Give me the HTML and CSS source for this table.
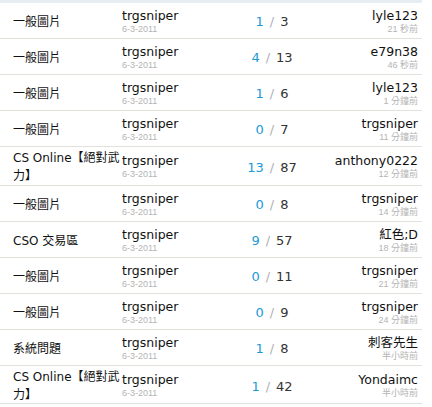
FILE: index.html
```html
<!DOCTYPE html>
<html>
<head>
<meta charset="utf-8">
<link rel="stylesheet" href="styles.css">
</head>
<body>
<div class="list">
  <div class="row"><div class="title">一般圖片</div><div class="author"><div class="name">trgsniper</div><div class="date">6-3-2011</div></div><div class="count"><span class="rep">1</span><span class="sep">/</span><span class="view">3</span></div><div class="last"><div class="name">lyle123</div><div class="time">21 秒前</div></div></div>
  <div class="row"><div class="title">一般圖片</div><div class="author"><div class="name">trgsniper</div><div class="date">6-3-2011</div></div><div class="count"><span class="rep">4</span><span class="sep">/</span><span class="view">13</span></div><div class="last"><div class="name">e79n38</div><div class="time">46 秒前</div></div></div>
  <div class="row"><div class="title">一般圖片</div><div class="author"><div class="name">trgsniper</div><div class="date">6-3-2011</div></div><div class="count"><span class="rep">1</span><span class="sep">/</span><span class="view">6</span></div><div class="last"><div class="name">lyle123</div><div class="time">1 分鐘前</div></div></div>
  <div class="row"><div class="title">一般圖片</div><div class="author"><div class="name">trgsniper</div><div class="date">6-3-2011</div></div><div class="count"><span class="rep">0</span><span class="sep">/</span><span class="view">7</span></div><div class="last"><div class="name">trgsniper</div><div class="time">11 分鐘前</div></div></div>
  <div class="row tall"><div class="title">CS Online【絕對武力】</div><div class="author"><div class="name">trgsniper</div><div class="date">6-3-2011</div></div><div class="count"><span class="rep">13</span><span class="sep">/</span><span class="view">87</span></div><div class="last"><div class="name">anthony0222</div><div class="time">12 分鐘前</div></div></div>
  <div class="row"><div class="title">一般圖片</div><div class="author"><div class="name">trgsniper</div><div class="date">6-3-2011</div></div><div class="count"><span class="rep">0</span><span class="sep">/</span><span class="view">8</span></div><div class="last"><div class="name">trgsniper</div><div class="time">14 分鐘前</div></div></div>
  <div class="row"><div class="title">CSO 交易區</div><div class="author"><div class="name">trgsniper</div><div class="date">6-3-2011</div></div><div class="count"><span class="rep">9</span><span class="sep">/</span><span class="view">57</span></div><div class="last"><div class="name">紅色;D</div><div class="time">18 分鐘前</div></div></div>
  <div class="row"><div class="title">一般圖片</div><div class="author"><div class="name">trgsniper</div><div class="date">6-3-2011</div></div><div class="count"><span class="rep">0</span><span class="sep">/</span><span class="view">11</span></div><div class="last"><div class="name">trgsniper</div><div class="time">21 分鐘前</div></div></div>
  <div class="row"><div class="title">一般圖片</div><div class="author"><div class="name">trgsniper</div><div class="date">6-3-2011</div></div><div class="count"><span class="rep">0</span><span class="sep">/</span><span class="view">9</span></div><div class="last"><div class="name">trgsniper</div><div class="time">24 分鐘前</div></div></div>
  <div class="row"><div class="title">系統問題</div><div class="author"><div class="name">trgsniper</div><div class="date">6-3-2011</div></div><div class="count"><span class="rep">1</span><span class="sep">/</span><span class="view">8</span></div><div class="last"><div class="name">刺客先生</div><div class="time">半小時前</div></div></div>
  <div class="row tall2"><div class="title">CS Online【絕對武力】</div><div class="author"><div class="name">trgsniper</div><div class="date">6-3-2011</div></div><div class="count"><span class="rep">1</span><span class="sep">/</span><span class="view">42</span></div><div class="last"><div class="name">Yondaimc</div><div class="time">半小時前</div></div></div>
</div>
</body>
</html>
```

FILE: styles.css
```css
html, body {
  margin: 0;
  padding: 0;
  background: #ffffff;
}
body {
  font-family: "DejaVu Sans", "Noto Sans CJK TC", sans-serif;
  color: #111111;
}
.list {
  width: 422px;
  border-top: 3px solid #e8edf2;
}
.row {
  display: grid;
  grid-template-columns: 122px 100px 100px 100px;
  align-items: center;
  height: 33px;
  padding-top: 2px;
  border-bottom: 1px solid #e2e2dc;
}
.row.tall { height: 36px; }
.row.tall2 { height: 35px; }
.title {
  padding-left: 13px;
  padding-right: 1px;
  font-size: 12px;
  line-height: 18px;
}
.author .name, .last .name {
  font-size: 12.5px;
  line-height: 14px;
}
.date {
  font-family: "Liberation Sans", Arial, sans-serif;
  font-size: 9px;
  line-height: 11px;
  color: #b4b4b4;
  margin-top: 1px;
}
.count {
  text-align: center;
  font-size: 13px;
}
.rep { color: #1b9ad6; }
.sep { color: #b0b0b0; margin: 0 6px; }
.view { color: #333333; }
.last {
  text-align: right;
  padding-right: 4px;
}
.time {
  font-family: "Liberation Sans", "Noto Sans CJK TC", sans-serif;
  font-size: 9px;
  line-height: 11px;
  color: #b4b4b4;
  margin-top: 1px;
}
```
